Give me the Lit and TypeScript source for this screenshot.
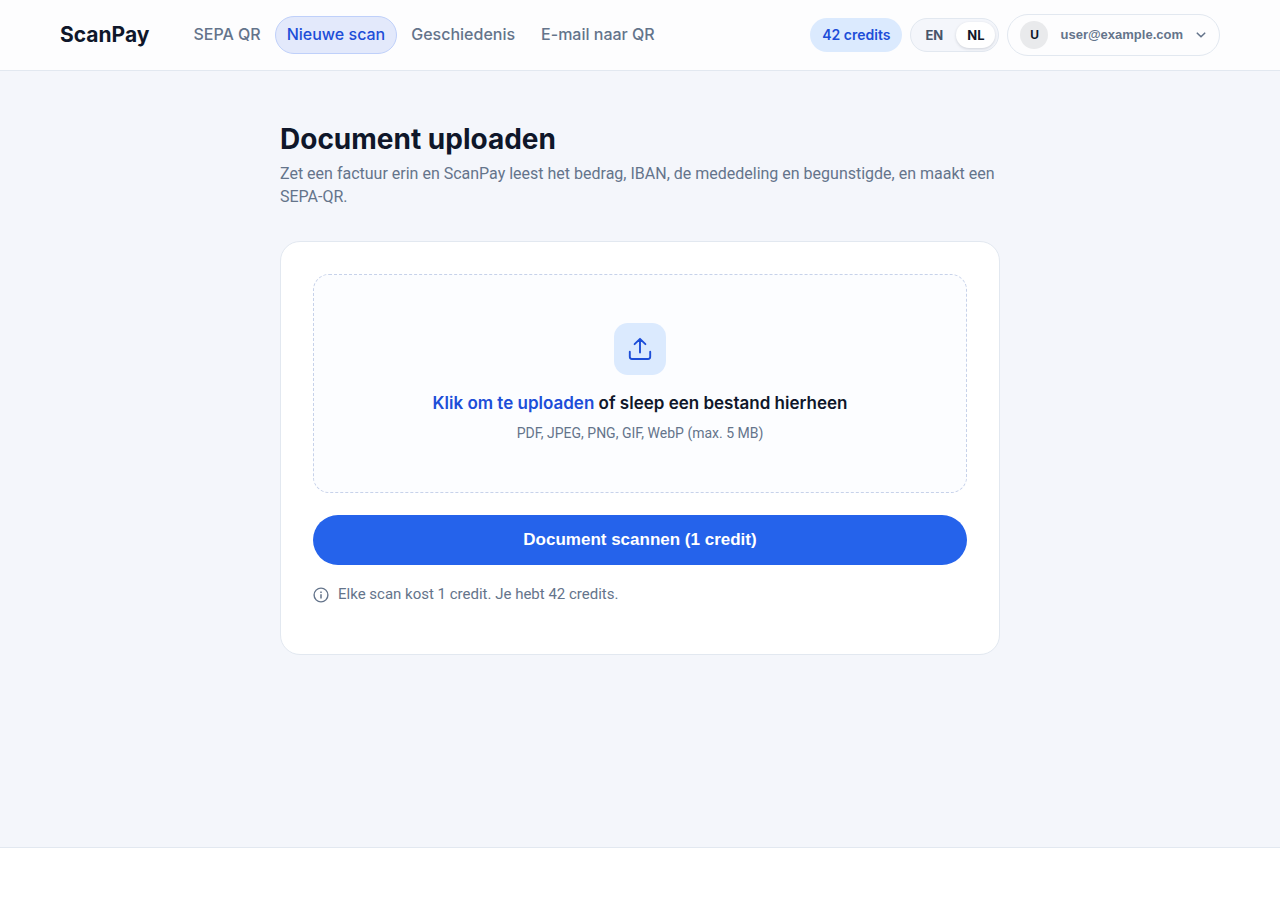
import { LitElement, html, css } from "lit";
import { customElement, state } from "lit/decorators.js";
import { classMap } from "lit/directives/class-map.js";

const NAV = ["SEPA QR", "Nieuwe scan", "Geschiedenis", "E-mail naar QR"];

@customElement("scan-header")
class ScanHeader extends LitElement {
  static styles = css`
    :host {
      display: block;
      background: #fdfdfe;
      border-bottom: 1px solid #e2e8f0;
    }
    .bar {
      display: flex;
      align-items: center;
      justify-content: space-between;
      padding: 14px 60px;
    }
    .left {
      display: flex;
      align-items: center;
      gap: 32px;
    }
    .brand {
      color: #0f172a;
      font-size: 21px;
      line-height: 28px;
      font-weight: 700;
      text-decoration: none;
    }
    nav {
      display: flex;
      gap: 2px;
    }
    .link {
      border: 1px solid transparent;
      border-radius: 19px;
      padding: 5px 11px 7px;
      color: #64748b;
      font-size: 16px;
      line-height: 24px;
      font-weight: 500;
      text-decoration: none;
      white-space: nowrap;
    }
    .link.active {
      background: #e3e9fb;
      border-color: #bfd0fa;
      color: #1d4ed8;
    }
    .right {
      display: flex;
      align-items: center;
      gap: 8px;
    }
    .credits {
      border-radius: 17px;
      background: #dbeafe;
      color: #1d4ed8;
      padding: 0 12px;
      font-size: 14px;
      line-height: 34px;
      font-weight: 600;
      white-space: nowrap;
    }
    .langs {
      display: flex;
      gap: 2px;
      padding: 3px;
      border: 1px solid #e2e8f0;
      border-radius: 17px;
      background: #f4f6fb;
    }
    .lang {
      border: 0;
      border-radius: 13px;
      padding: 0 11px;
      background: none;
      color: #475569;
      font: 700 13px/26px "Inter", sans-serif;
    }
    .lang.on {
      background: #fff;
      color: #0f172a;
      box-shadow: 0 1px 3px rgba(15, 23, 42, 0.16);
    }
    .user {
      display: flex;
      align-items: center;
      gap: 12px;
      border: 1px solid #e2e8f0;
      border-radius: 21px;
      padding: 6px 12px;
      background: none;
      color: #64748b;
      font: 700 13px/28px "Liberation Sans", Arial, sans-serif;
    }
    .avatar {
      width: 28px;
      border-radius: 14px;
      background: #e9eaec;
      color: #0f172a;
      font-size: 12px;
      text-align: center;
    }
  `;

  @state() private lang = "NL";

  render() {
    return html`<header class="bar">
      <div class="left">
        <a class="brand" href="#">ScanPay</a>
        <nav>
          ${NAV.map(
            (n) => html`<a class=${classMap({ link: true, active: n === "Nieuwe scan" })} href="#">${n}</a>`
          )}
        </nav>
      </div>
      <div class="right">
        <span class="credits">42 credits</span>
        <div class="langs">
          ${["EN", "NL"].map(
            (l) => html`<button
              class=${classMap({ lang: true, on: l === this.lang })}
              @click=${() => (this.lang = l)}
            >${l}</button>`
          )}
        </div>
        <button class="user">
          <span class="avatar">U</span>
          <span>user@example.com</span>
          <svg width="12" height="12" viewBox="0 0 12 12" fill="none" stroke="currentColor"
            stroke-width="1.6" stroke-linecap="round" stroke-linejoin="round">
            <path d="M2.3 4.2 6 7.8l3.7-3.6" />
          </svg>
        </button>
      </div>
    </header>`;
  }
}

@customElement("upload-card")
class UploadCard extends LitElement {
  static styles = css`
    :host {
      display: block;
    }
    .card {
      border: 1px solid #e2e8f0;
      border-radius: 20px;
      background: #fff;
      padding: 32px 32px 48px;
    }
    .drop {
      display: flex;
      flex-direction: column;
      align-items: center;
      border: 1px dashed #c7d2ea;
      border-radius: 16px;
      background: #fcfdff;
      padding: 48px 24px;
      text-align: center;
    }
    .file {
      position: absolute;
      width: 1px;
      height: 1px;
      opacity: 0;
    }
    .icon {
      display: grid;
      place-items: center;
      width: 52px;
      height: 52px;
      border-radius: 14px;
      background: #dbeafe;
      color: #1d4ed8;
    }
    .title {
      margin-top: 14px;
      color: #0f172a;
      font-size: 17px;
      line-height: 28px;
      font-weight: 600;
    }
    .title b {
      color: #1d4ed8;
      font-weight: 600;
    }
    .meta {
      margin-top: 5px;
      color: #64748b;
      font-family: "Roboto", sans-serif;
      font-size: 14px;
      line-height: 22px;
    }
    .submit {
      display: block;
      width: 100%;
      margin-top: 22px;
      border: 0;
      border-radius: 25px;
      padding: 12px;
      background: #2563eb;
      color: #fff;
      font: 700 17px/26px "Liberation Sans", Arial, sans-serif;
    }
    .note {
      display: flex;
      align-items: center;
      gap: 9px;
      margin: 18px 0 0;
      color: #64748b;
      font-family: "Roboto", sans-serif;
      font-size: 15px;
      line-height: 23px;
    }
  `;

  render() {
    return html`<form class="card" @submit=${(e: Event) => e.preventDefault()}>
      <input class="file" id="file" type="file" accept=".pdf,.jpg,.jpeg,.png,.gif,.webp" />
      <label class="drop" for="file">
        <span class="icon">
          <svg width="26" height="26" viewBox="0 0 26 26" fill="none" stroke="currentColor"
            stroke-width="1.9" stroke-linecap="round" stroke-linejoin="round">
            <path d="M13 16.5V3M7.6 8.2 13 2.8l5.4 5.4M2.8 15.8v5a2.2 2.2 0 0 0 2.2 2.2h16a2.2 2.2 0 0 0 2.2-2.2v-5" />
          </svg>
        </span>
        <span class="title"><b>Klik om te uploaden</b> of sleep een bestand hierheen</span>
        <span class="meta">PDF, JPEG, PNG, GIF, WebP (max. 5 MB)</span>
      </label>
      <button class="submit" type="submit">Document scannen (1 credit)</button>
      <p class="note">
        <svg width="16" height="16" viewBox="0 0 16 16" fill="none" stroke="currentColor" stroke-width="1.4">
          <circle cx="8" cy="8" r="6.9" />
          <path d="M8 7.3v4.2M8 4.5v1.4" stroke-width="1.5" />
        </svg>
        Elke scan kost 1 credit. Je hebt 42 credits.
      </p>
    </form>`;
  }
}

@customElement("app-root")
class AppRoot extends LitElement {
  static styles = css`
    :host {
      display: flex;
      flex-direction: column;
      min-height: 100vh;
      background: #f4f6fb;
      font-family: "Inter", sans-serif;
    }
    main {
      flex: 1;
      box-sizing: border-box;
      width: 100%;
      max-width: 760px;
      margin: 0 auto;
      padding: 48px 20px;
    }
    h1 {
      margin: 0;
      color: #0f172a;
      font-size: 28px;
      line-height: 40px;
      font-weight: 700;
    }
    .lead {
      margin: 3px 0 33px;
      color: #64748b;
      font-family: "Roboto", sans-serif;
      font-size: 16px;
      line-height: 23px;
    }
    footer {
      border-top: 1px solid #e2e8f0;
      background: #fff;
      padding: 26px 60px;
    }
  `;

  render() {
    return html`<scan-header></scan-header>
      <main>
        <h1>Document uploaden</h1>
        <p class="lead">
          Zet een factuur erin en ScanPay leest het bedrag, IBAN, de mededeling en begunstigde, en maakt een SEPA-QR.
        </p>
        <upload-card></upload-card>
      </main>
      <footer></footer>`;
  }
}
